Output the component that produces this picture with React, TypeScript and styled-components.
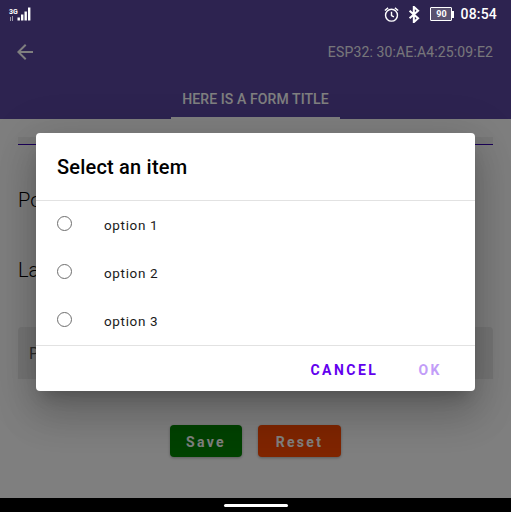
import React from 'react'
import styled, { createGlobalStyle } from 'styled-components'

const GlobalStyle = createGlobalStyle`
  html, body {
    margin: 0;
    padding: 0;
    background: #000;
    font-family: Roboto, "Liberation Sans", sans-serif;
  }
`

const options = ['option 1', 'option 2', 'option 3']

const App = (): JSX.Element => (
  <Screen>
    <GlobalStyle />
    <StatusBar>
      <SignalGroup>
        <NetworkType>
          <span>3G</span>
          <svg width="8" height="5" viewBox="0 0 8 5">
            <path d="M1.5 5V1M3.5 5V0" stroke="#9a96a8" strokeWidth="1" />
          </svg>
        </NetworkType>
        <svg width="14" height="14" viewBox="0 0 14 14">
          <path d="M0.5 13.5h2.4v-3h-2.4zM4 13.5h2.4v-6h-2.4zM7.5 13.5h2.4v-9h-2.4zM11 13.5h2.4v-13h-2.4z" fill="#fff" />
        </svg>
      </SignalGroup>
      <StatusRight>
        <svg width="17" height="17" viewBox="0 0 24 24" fill="none" stroke="#fff" strokeWidth="2">
          <circle cx="12" cy="13" r="8.4" />
          <path d="M12 8v5.4l3.4 2M2.6 6.4l4.6-3.8M21.4 6.4l-4.6-3.8" />
        </svg>
        <BluetoothIcon width="12" height="17" viewBox="0 0 12 20" fill="none" stroke="#fff" strokeWidth="2.4">
          <path d="M0.8 5.5l10 9-5 4.5V1l5 4.5-10 9" />
        </BluetoothIcon>
        <Battery>
          <BatteryBody>90</BatteryBody>
          <BatteryTip />
        </Battery>
        <Clock>08:54</Clock>
      </StatusRight>
    </StatusBar>

    <AppBar>
      <Toolbar>
        <svg width="24" height="24" viewBox="0 0 24 24" fill="#fff">
          <path d="M20 11H7.83l5.59-5.59L12 4l-8 8 8 8 1.41-1.41L7.83 13H20v-2z" />
        </svg>
        <DeviceId>ESP32: 30:AE:A4:25:09:E2</DeviceId>
      </Toolbar>
      <TabRow>
        <Tab>HERE IS A FORM TITLE</Tab>
      </TabRow>
    </AppBar>

    <Main>
      <NameInput />
      <FieldLabel $top={43}>Port</FieldLabel>
      <FieldLabel $top={46}>Label</FieldLabel>
      <TextBox>Password</TextBox>
      <ButtonRow>
        <ActionButton $color="#008500" $width={72}>Save</ActionButton>
        <ActionButton $color="#ff4a00" $width={83}>Reset</ActionButton>
      </ButtonRow>
    </Main>

    <NavBar>
      <NavHandle />
    </NavBar>

    <Scrim>
      <Dialog>
        <DialogTitle>Select an item</DialogTitle>
        <OptionList>
          {options.map((option) => (
            <OptionRow key={option}>
              <Radio />
              <OptionText>{option}</OptionText>
            </OptionRow>
          ))}
        </OptionList>
        <DialogActions>
          <DialogButton $color="#6200ee">CANCEL</DialogButton>
          <DialogButton $color="#c29df8">OK</DialogButton>
        </DialogActions>
      </Dialog>
    </Scrim>
  </Screen>
)

export default App

const Screen = styled.div`
  position: relative;
  width: 511px;
  height: 512px;
  overflow: hidden;
  display: flex;
  flex-direction: column;
  background: #fff;
`
const StatusBar = styled.div`
  position: relative;
  z-index: 3;
  height: 28px;
  flex: none;
  display: flex;
  align-items: center;
  justify-content: space-between;
  padding: 0 14px 0 9px;
  background: #2d2350;
  color: #fff;
`
const SignalGroup = styled.div`
  display: flex;
  align-items: flex-end;
  margin-top: -1px;
`
const NetworkType = styled.div`
  display: flex;
  flex-direction: column;
  width: 8px;
  font-size: 7px;
  font-weight: 700;
  line-height: 8px;
`
const StatusRight = styled.div`
  display: flex;
  align-items: center;
`
const BluetoothIcon = styled.svg`
  margin: 0 10px 0 8px;
`
const Battery = styled.div`
  display: flex;
  align-items: center;
  margin-right: 6px;
`
const BatteryBody = styled.div`
  box-sizing: border-box;
  width: 22px;
  height: 14px;
  border: 1px solid #fff;
  border-radius: 1px;
  background: #5a5270;
  color: #fff;
  font-size: 9px;
  font-weight: 700;
  line-height: 12px;
  text-align: center;
`
const BatteryTip = styled.div`
  width: 2px;
  height: 7px;
  background: #fff;
`
const Clock = styled.div`
  font-size: 14px;
  font-weight: 500;
  letter-spacing: 0.2px;
`
const AppBar = styled.div`
  flex: none;
  height: 91px;
  display: flex;
  flex-direction: column;
  background: #5a46a0;
  color: #fff;
`
const Toolbar = styled.div`
  height: 47px;
  display: flex;
  align-items: center;
  justify-content: space-between;
  padding: 0 18px 0 13px;
`
const DeviceId = styled.div`
  font-size: 14px;
  letter-spacing: 0.14px;
  opacity: 0.9;
`
const TabRow = styled.div`
  flex: 1;
  display: flex;
  justify-content: center;
`
const Tab = styled.div`
  box-sizing: border-box;
  width: 169px;
  height: 44px;
  padding-top: 16px;
  border-bottom: 2px solid #fff;
  text-align: center;
  font-size: 14px;
  font-weight: 500;
  letter-spacing: 0.1px;
`
const Main = styled.div`
  flex: 1;
  display: flex;
  flex-direction: column;
  padding: 18px 18px 0;
  color: #000;
`
const NameInput = styled.div`
  height: 7px;
  background: #f0f0f0;
  border-bottom: 1px solid #3700b3;
`
const FieldLabel = styled.div<{ $top: number }>`
  margin-top: ${(p) => p.$top}px;
  font-size: 20px;
  font-weight: 300;
  line-height: 24px;
`
const TextBox = styled.div`
  box-sizing: border-box;
  height: 52px;
  margin-top: 45px;
  padding-left: 11px;
  display: flex;
  align-items: center;
  background: #ececec;
  border-radius: 4px 4px 0 0;
  color: #555;
  font-size: 16px;
`
const ButtonRow = styled.div`
  display: flex;
  justify-content: center;
  gap: 16px;
  margin-top: 46px;
`
const ActionButton = styled.div<{ $color: string; $width: number }>`
  box-sizing: border-box;
  width: ${(p) => p.$width}px;
  height: 32px;
  padding-top: 1px;
  display: flex;
  align-items: center;
  justify-content: center;
  background: ${(p) => p.$color};
  border-radius: 4px;
  box-shadow: 0 1px 3px rgba(0, 0, 0, 0.3);
  color: #fff;
  font-size: 14px;
  font-weight: 700;
  letter-spacing: 2.3px;
`
const NavBar = styled.div`
  position: relative;
  z-index: 3;
  flex: none;
  height: 14px;
  display: flex;
  justify-content: center;
  align-items: center;
  background: #000;
`
const NavHandle = styled.div`
  width: 64px;
  height: 3px;
  border-radius: 2px;
  background: #fff;
`
const Scrim = styled.div`
  position: absolute;
  z-index: 2;
  inset: 0 0 14px 0;
  padding-top: 26px;
  box-sizing: border-box;
  display: flex;
  align-items: center;
  justify-content: center;
  background: rgba(0, 0, 0, 0.5);
`
const Dialog = styled.div`
  width: 439px;
  height: 258px;
  display: flex;
  flex-direction: column;
  background: #fff;
  border-radius: 4px;
  box-shadow: 0 11px 15px -7px rgba(0, 0, 0, 0.2), 0 24px 38px 3px rgba(0, 0, 0, 0.14), 0 9px 46px 8px rgba(0, 0, 0, 0.12);
`
const DialogTitle = styled.div`
  box-sizing: border-box;
  flex: none;
  height: 68px;
  padding: 22px 21px 0;
  border-bottom: 1px solid #e2e2e2;
  color: #000;
  font-size: 20px;
  font-weight: 500;
  line-height: 24px;
  letter-spacing: 0.2px;
`
const OptionList = styled.div`
  flex: 1;
  display: flex;
  flex-direction: column;
`
const OptionRow = styled.div`
  flex: none;
  height: 48px;
  display: flex;
  align-items: center;
  padding-left: 21px;
`
const Radio = styled.div`
  box-sizing: border-box;
  width: 15px;
  height: 15px;
  margin-top: -3px;
  border: 1.7px solid #6e6e6e;
  border-radius: 50%;
`
const OptionText = styled.div`
  margin-left: 32px;
  color: #1a1a1a;
  font-size: 13.5px;
  letter-spacing: 0.65px;
`
const DialogActions = styled.div`
  box-sizing: border-box;
  flex: none;
  height: 47px;
  padding: 1px 33px 0 0;
  display: flex;
  align-items: center;
  justify-content: flex-end;
  gap: 40px;
  border-top: 1px solid #e2e2e2;
`
const DialogButton = styled.div<{ $color: string }>`
  color: ${(p) => p.$color};
  font-size: 14px;
  font-weight: 700;
  letter-spacing: 2.5px;
`
